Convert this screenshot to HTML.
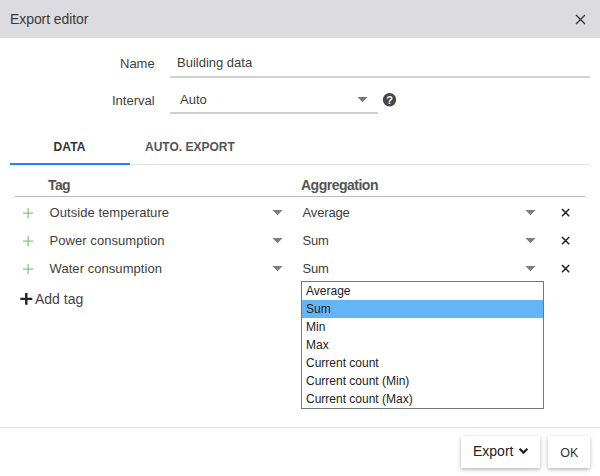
<!DOCTYPE html>
<html><head><meta charset="utf-8">
<style>
*{box-sizing:border-box;margin:0;padding:0}
html,body{width:600px;height:476px;overflow:hidden;background:#fff}
body{font-family:"Liberation Sans",sans-serif;color:#3e3e3e;position:relative;font-size:13px}
.abs{position:absolute;white-space:nowrap;line-height:1}
.hdr{position:absolute;left:0;top:0;width:600px;height:38px;background:#dcdce0}
.line{position:absolute;background:#ccc}
.t{position:absolute;white-space:nowrap;line-height:16px;height:16px}
</style></head><body>
<div class="hdr"></div>
<div class="t" id="title" style="left:10px;top:11px;font-size:14px;color:#3a3a3a;letter-spacing:-0.08px">Export editor</div>
<svg class="abs" style="left:575px;top:13.500px" width="11" height="11" viewBox="0 0 11 11"><path d="M1 1 L10 10 M10 1 L1 10" stroke="#333" stroke-width="1.3" fill="none"/></svg>

<div class="t" id="lname" style="left:120px;top:56px;font-size:13px">Name</div>
<div class="t" id="vname" style="left:177px;top:55px;font-size:13px">Building data</div>
<div class="line" style="left:170px;top:76px;width:420px;height:2px;background:#d0d0d0"></div>

<div class="t" id="linterval" style="left:112px;top:93px;font-size:13px">Interval</div>
<div class="t" id="vinterval" style="left:180px;top:92px;font-size:13px">Auto</div>
<div class="line" style="left:170px;top:112px;width:208px;height:2px;background:#d0d0d0"></div>
<svg class="abs" style="left:357px;top:97px" width="11" height="6" viewBox="0 0 11 6"><path d="M0.500 0 H10.500 L5.500 5.200 Z" fill="#777"/></svg>
<svg class="abs" style="left:382px;top:92px" width="16" height="16" viewBox="0 0 16 16"><circle cx="7.500" cy="7.800" r="6.700" fill="#47474b"/><text x="7.500" y="11.800" text-anchor="middle" font-family="Liberation Sans, sans-serif" font-weight="bold" font-size="11" fill="#fff">?</text></svg>

<div class="t" id="tab1" style="left:53.600px;letter-spacing:0.1px;top:139px;font-size:12px;font-weight:bold;color:#333">DATA</div>
<div class="t" id="tab2" style="left:145px;top:139px;font-size:12px;font-weight:bold;color:#555">AUTO. EXPORT</div>
<div class="line" style="left:10px;top:164px;width:580px;height:1px;background:#e3e3e3"></div>
<div class="line" style="left:10px;top:163px;width:120px;height:2px;background:#1e88e5"></div>

<div class="t" id="htag" style="left:48px;top:177px;font-size:14px;font-weight:bold;color:#555;letter-spacing:-0.6px">Tag</div>
<div class="t" id="hagg" style="left:301px;top:177px;font-size:14px;font-weight:bold;color:#555;letter-spacing:-0.5px">Aggregation</div>
<div class="line" style="left:15px;top:196px;width:570px;height:1px;background:#bbb"></div>

<!-- rows -->
<div class="t" id="r1a" style="left:49.600px;letter-spacing:0.05px;top:205px">Outside temperature</div>
<div class="t" id="r1b" style="left:302.500px;letter-spacing:-0.15px;top:205px">Average</div>
<div class="t" id="r2a" style="left:49.600px;letter-spacing:0.05px;top:233px">Power consumption</div>
<div class="t" id="r2b" style="left:302.500px;letter-spacing:-0.15px;top:233px">Sum</div>
<div class="t" id="r3a" style="left:49.600px;letter-spacing:0.05px;top:261px">Water consumption</div>
<div class="t" id="r3b" style="left:302.500px;letter-spacing:-0.15px;top:261px">Sum</div>

<svg class="abs" style="left:0;top:0" width="600" height="476" viewBox="0 0 600 476">
 <g stroke="#81c784" stroke-width="1.300" fill="none">
  <path d="M23 213.100 H33.200 M28.100 208 V218.200"/>
  <path d="M23 241.100 H33.200 M28.100 236 V246.200"/>
  <path d="M23 269.100 H33.200 M28.100 264 V274.200"/>
 </g>
 <g fill="#7d7d7d">
  <path d="M272.5 210 h10 l-5 5.200 Z"/>
  <path d="M272.5 238 h10 l-5 5.200 Z"/>
  <path d="M272.5 266 h10 l-5 5.200 Z"/>
  <path d="M525.5 210 h10 l-5 5.200 Z"/>
  <path d="M525.5 238 h10 l-5 5.200 Z"/>
  <path d="M525.5 266 h10 l-5 5.200 Z"/>
 </g>
 <g stroke="#222" stroke-width="1.500" fill="none">
  <path d="M562 209 l7.200 7.200 M569.200 209 l-7.200 7.200"/>
  <path d="M562 237 l7.200 7.200 M569.200 237 l-7.200 7.200"/>
  <path d="M562 265 l7.200 7.200 M569.200 265 l-7.200 7.200"/>
 </g>
 <path d="M20.300 298.900 H32.300 M26.300 293 V304.800" stroke="#222" stroke-width="2.400" fill="none"/>
</svg>
<div class="t" id="addtag" style="left:35px;top:291px;font-size:14px;color:#444">Add tag</div>

<!-- dropdown -->
<div style="position:absolute;left:301px;top:281px;width:243px;height:128px;border:1px solid #767676;background:#fff"></div>
<div style="position:absolute;left:302px;top:300px;width:241px;height:18px;background:#64b5f6"></div>
<div class="t" id="o1" style="left:306px;top:283px;font-size:12px;color:#222">Average</div>
<div class="t" id="o2" style="left:306px;top:301px;font-size:12px;color:#222">Sum</div>
<div class="t" id="o3" style="left:306px;top:319px;font-size:12px;color:#222">Min</div>
<div class="t" id="o4" style="left:306px;top:337px;font-size:12px;color:#222">Max</div>
<div class="t" id="o5" style="left:306px;top:355px;font-size:12px;color:#222">Current count</div>
<div class="t" id="o6" style="left:306px;top:373px;font-size:12px;color:#222">Current count (Min)</div>
<div class="t" id="o7" style="left:306px;top:391px;font-size:12px;color:#222">Current count (Max)</div>

<div class="line" style="left:0;top:427px;width:600px;height:1px;background:#e0e0e0"></div>
<div style="position:absolute;left:461px;top:436px;width:79px;height:32px;background:#fff;box-shadow:0 2px 3px 0 rgba(0,0,0,.16),0 1px 5px 0 rgba(0,0,0,.14)"></div>
<div style="position:absolute;left:548px;top:436px;width:42px;height:32px;background:#fff;box-shadow:0 2px 3px 0 rgba(0,0,0,.16),0 1px 5px 0 rgba(0,0,0,.14)"></div>
<div class="t" id="bexp" style="left:473px;top:443px;font-size:14px;color:#222">Export</div>
<svg class="abs" style="left:519px;top:448px" width="9" height="6" viewBox="0 0 9 6" overflow="visible"><path d="M0.600 0.800 L4.500 4.600 L8.400 0.800" stroke="#222" stroke-width="2.200" fill="none"/></svg>
<div class="t" id="bok" style="left:560.300px;top:445px;font-size:12.500px;color:#333">OK</div>
</body></html>
